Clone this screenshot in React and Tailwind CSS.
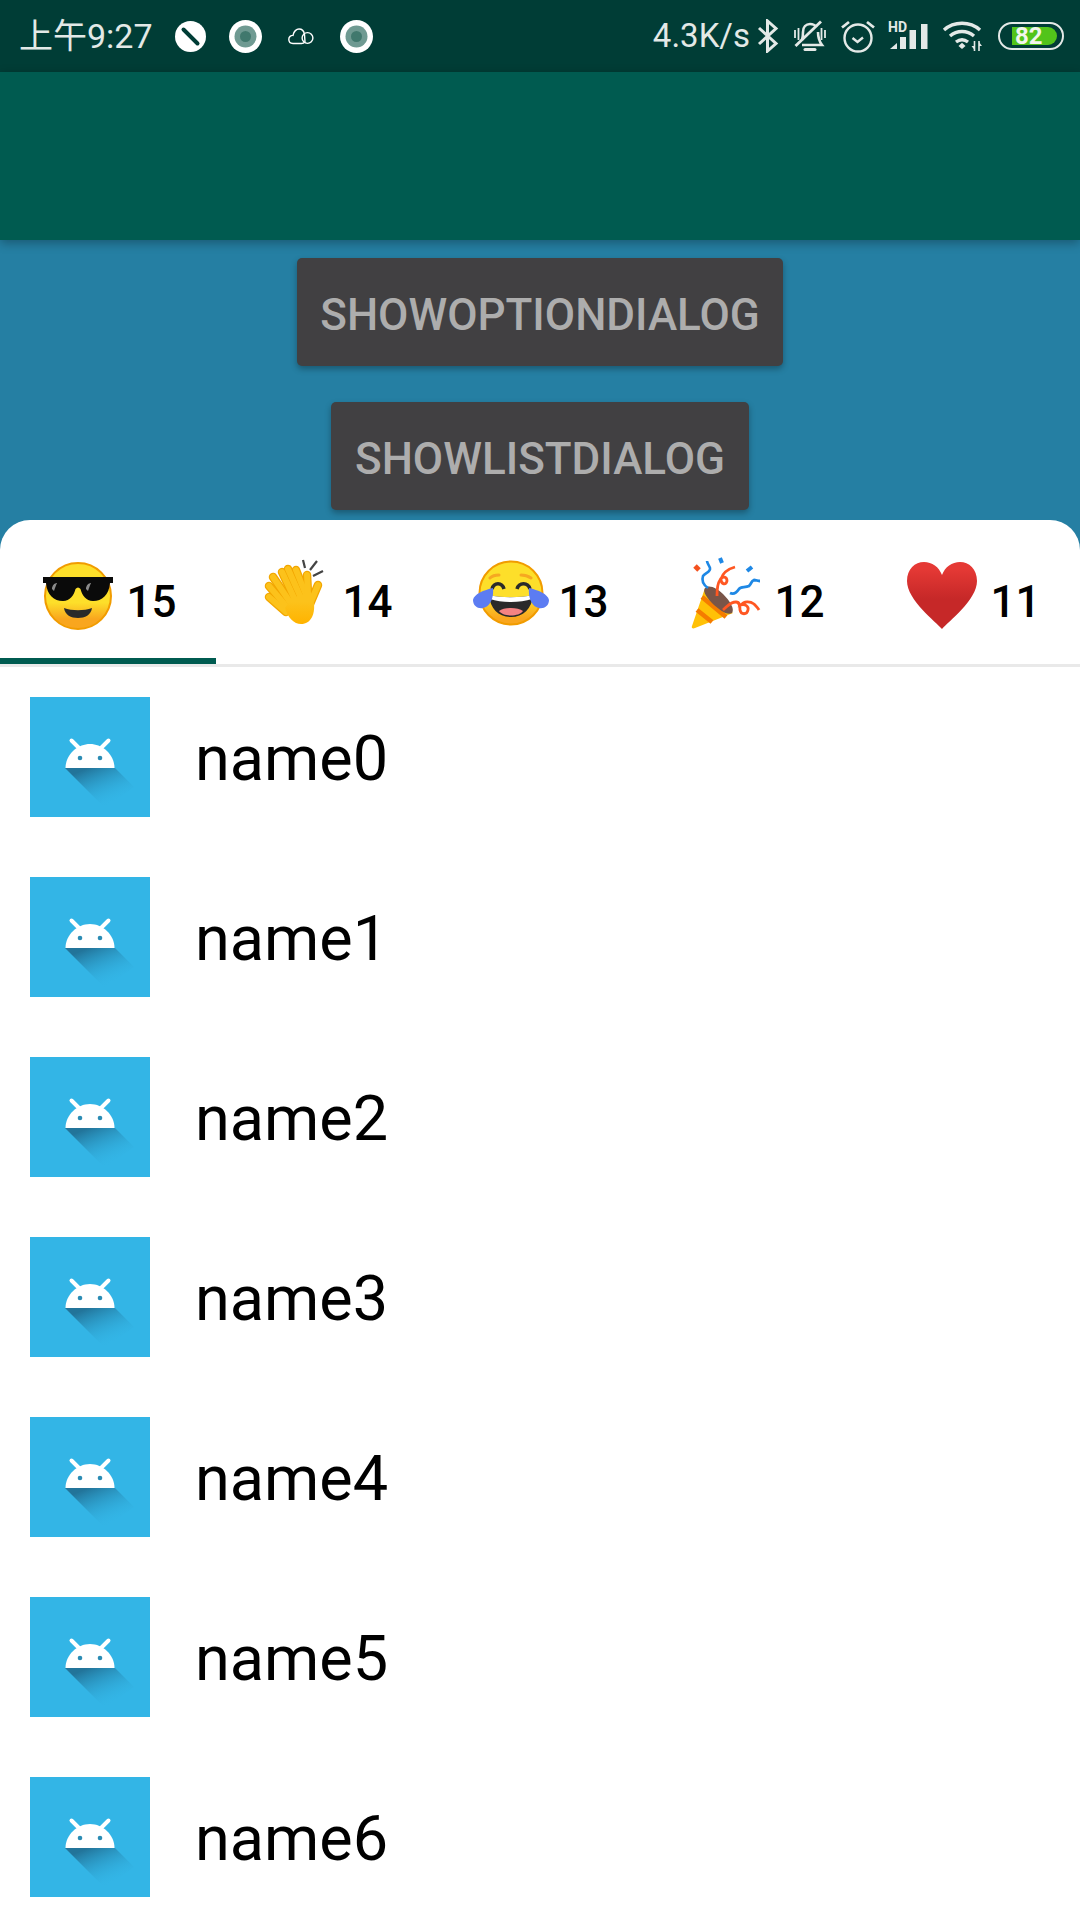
const rows = ["name0", "name1", "name2", "name3", "name4", "name5", "name6"];

function RingDot() {
  return (
    <svg width="33" height="33" viewBox="0 0 33 33">
      <circle cx="16.5" cy="16.5" r="16.5" fill="#fff" />
      <circle cx="16.5" cy="16.5" r="11" fill="#6f9a92" />
      <circle cx="16.5" cy="16.5" r="5.5" fill="#40786d" />
    </svg>
  );
}

function BlockIcon() {
  return (
    <svg width="31" height="31" viewBox="0 0 31 31">
      <circle cx="15.5" cy="15.5" r="15.5" fill="#fff" />
      <path d="M8.5 8.5 L22.5 22.5" stroke="#003d36" strokeWidth="4" strokeLinecap="round" />
    </svg>
  );
}

function CloudIcon() {
  return (
    <svg width="26" height="17" viewBox="0 0 26 17" fill="none" stroke="#fff" strokeWidth="1.4">
      <path d="M5 15.5 C1.5 15.5 .8 12.8 .8 11.3 C.8 8.8 2.8 7.3 5 7.4 C5.6 3.2 8.6 1 11 1 C14 1 16 3.4 16.5 6.4 L17 14 C16 15 15 15.5 13.5 15.5 Z" />
      <circle cx="19.5" cy="10" r="5.4" />
    </svg>
  );
}

function BluetoothIcon() {
  return (
    <svg width="22" height="34" viewBox="0 0 22 34" fill="none" stroke="#e3e9e7" strokeWidth="3">
      <path d="M2 9 L19 24.5 L10.5 32 V2 L19 9.5 L2 25" />
    </svg>
  );
}

function MutedBell() {
  return (
    <svg width="34" height="33" viewBox="0 0 34 33" fill="none" stroke="#e3e9e7" strokeWidth="2.6">
      <path d="M9 20 C10 17 10 15 10 12 C10 7 13 4 17 4 C20 4 22 5 23.5 7" />
      <path d="M25 12 C25 17 26 21 29 25 H9" />
      <path d="M12 29.5 H22" strokeWidth="3" strokeLinecap="round" />
      <path d="M2.5 26 L28 1.5" strokeWidth="2.8" />
      <path d="M2 10 V18 M5.5 8 V20 M28.5 8 V20 M32 10 V18" strokeWidth="1.8" />
    </svg>
  );
}

function AlarmIcon() {
  return (
    <svg width="34" height="33" viewBox="0 0 34 33" fill="none" stroke="#e3e9e7" strokeWidth="2.4">
      <circle cx="17" cy="18" r="13.5" />
      <path d="M11.5 18 L16.5 22 L22 17.5" />
      <path d="M1 7.5 L8 2 M33 7.5 L26 2" strokeWidth="2.8" />
    </svg>
  );
}

function SignalIcon() {
  return (
    <svg width="41" height="30" viewBox="0 0 41 30" fill="#e3e9e7">
      <path d="M2 28 L9 22 V28 Z" />
      <rect x="12" y="16" width="6" height="12" />
      <rect x="21.5" y="9" width="6.5" height="19" />
      <rect x="33" y="3" width="6.5" height="25" />
      <text x="0" y="11" fontSize="14" fontWeight="700" fontFamily="Roboto, sans-serif">HD</text>
    </svg>
  );
}

function WifiIcon() {
  return (
    <svg width="42" height="32" viewBox="0 0 42 32" fill="none" stroke="#e3e9e7" strokeWidth="3.4">
      <path d="M2 10 C12 1 28 1 38 10" />
      <path d="M8 16 C15 10 25 10 32 16" />
      <path d="M14 22 C18 19 22 19 26 22" />
      <path d="M16.5 26 L20 22.8 L23.5 26 L20 29 Z" fill="#e3e9e7" stroke="none" />
      <path d="M32.5 21 V31 M37 21 V31" strokeWidth="1.6" />
      <path d="M29.5 26 H32.5 V30 Z M37 22 V26 H40 Z" fill="#e3e9e7" stroke="none" />
    </svg>
  );
}

function Battery() {
  return (
    <div className="flex h-[28px] w-[66px] items-center rounded-full border-[2.5px] border-[#e3e9e7] pl-[12px] pr-[3px]">
      <div className="flex h-[18px] w-[45px] items-center justify-start rounded-r-full bg-[#52c41a] pl-[3px] text-[24px] font-bold leading-none text-[#f2f6ee]">
        82
      </div>
    </div>
  );
}

function StatusBar() {
  return (
    <div className="flex h-[72px] shrink-0 items-center bg-[#003d36] pl-[19px] pr-[16px] font-['Roboto','Noto_Sans_CJK_SC',sans-serif] text-[#e3e9e7]">
      <span className="w-[133px] whitespace-nowrap text-[34px] leading-[44px]">上午9:27</span>
      <div className="ml-[23px]"><BlockIcon /></div>
      <div className="ml-[23px]"><RingDot /></div>
      <div className="ml-[26px]"><CloudIcon /></div>
      <div className="ml-[26px]"><RingDot /></div>
      <div className="ml-auto flex items-center">
        <span className="text-[33px] leading-[44px]">4.3K/s</span>
        <div className="ml-[7px]"><BluetoothIcon /></div>
        <div className="ml-[14px]"><MutedBell /></div>
        <div className="ml-[14px]"><AlarmIcon /></div>
        <div className="ml-[13px]"><SignalIcon /></div>
        <div className="ml-[13px]"><WifiIcon /></div>
        <div className="ml-[14px]"><Battery /></div>
      </div>
    </div>
  );
}

function DialogButton({ label, width }) {
  return (
    <div className={`flex h-[108px] ${width} items-center justify-center rounded-[5px] bg-[#414042] pt-[5px] text-[44px] font-medium text-[#adadad] shadow-[0_3px_6px_rgba(0,0,0,0.3)]`}>
      {label}
    </div>
  );
}

function CoolEmoji() {
  return (
    <svg width="72" height="72" viewBox="0 0 72 72">
      <defs>
        <linearGradient id="cool" x1="0" y1="0" x2="0" y2="1">
          <stop offset="0.6" stopColor="#fddf2a" />
          <stop offset="0.85" stopColor="#f9a61e" />
        </linearGradient>
      </defs>
      <circle cx="36" cy="36" r="33" fill="url(#cool)" stroke="#f19c00" strokeWidth="2" />
      <path d="M1 17 H71 V23 H68 C67 35 60 41 51 41 C44 41 40 35 38.5 29 C37 27 35 27 33.5 29 C32 35 28 41 21 41 C12 41 5 35 4 23 H1 Z" fill="#0a0a0a" />
      <path d="M10 29 C10 25 13 23 15 23 C14 25 13 28 12 31 Z M44 29 C44 25 47 23 49 23 C48 25 47 28 46 31 Z" fill="#8a8a8a" />
      <path d="M22 48 C30 51 42 51 50 48 C49 55 43 58 36 58 C29 58 23 55 22 48 Z" fill="#2a2a2a" />
    </svg>
  );
}

const clapFingers = [
  "M11 37 L28 52",
  "M11 26 L28 46",
  "M15 17 L32 42",
  "M24 12 L37 40",
  "M30 9 L43 38",
  "M38 10 L48 35",
  "M49 15 L50 34",
  "M60 25 L52 44",
];

function ClapEmoji() {
  return (
    <svg width="72" height="72" viewBox="0 0 72 72" className="overflow-visible">
      <defs>
        <linearGradient id="clap" x1="0" y1="0" x2="0" y2="1">
          <stop offset="0.3" stopColor="#fcc21b" />
          <stop offset="1" stopColor="#ffb300" />
        </linearGradient>
      </defs>
      <g fill="none" stroke="#f2a600" strokeWidth="8.5" strokeLinecap="round">
        {clapFingers.map((d) => <path key={d} d={d} />)}
      </g>
      <g fill="none" stroke="#fcc21b" strokeWidth="6" strokeLinecap="round">
        {clapFingers.map((d) => <path key={d} d={d} />)}
      </g>
      <path d="M27 48 L34 38 L52 32 L56 44 C57 54 53 64 43 64 C36 64 30 58 27 48 Z" fill="url(#clap)" />
      <path d="M45 0 L47 8 M59 1 L52 10 M65 11 L55 16" stroke="#444" strokeWidth="2.2" fill="none" />
    </svg>
  );
}

function LaughEmoji() {
  return (
    <svg width="72" height="72" viewBox="0 0 72 72" className="overflow-visible">
      <defs>
        <linearGradient id="laugh" x1="0" y1="0" x2="0" y2="1">
          <stop offset="0.55" stopColor="#fddf2a" />
          <stop offset="0.9" stopColor="#f9a61e" />
        </linearGradient>
      </defs>
      <circle cx="37" cy="33" r="31.5" fill="url(#laugh)" stroke="#f19c00" strokeWidth="2" />
      <path d="M16 18 C18 16 22 15 25 15 M47 15 C50 15 54 16 57 18" stroke="#f6a821" strokeWidth="3" fill="none" strokeLinecap="round" />
      <path d="M18 29 C20 22 28 22 30 29 M43 29 C45 22 54 22 56 29" stroke="#2a2a2a" strokeWidth="3.5" fill="none" />
      <path d="M15 35 C28 38 46 38 59 35 C58 49 49 57 37 57 C25 57 16 49 15 35 Z" fill="#2a2a2a" />
      <path d="M15 35 C28 38 46 38 59 35 L58 39 C46 43 28 43 16 39 Z" fill="#fff" />
      <path d="M25 51 C30 47 44 47 49 51 C45 57 29 57 25 51 Z" fill="#f58383" />
      <path d="M19 28 C10 30 0 34 -1 40 C-1 46 4 49 9 48 C16 47 20 38 19 28 Z M55 28 C64 30 74 34 75 40 C75 46 70 49 65 48 C58 47 54 38 55 28 Z" fill="#5c7cf2" />
    </svg>
  );
}

function PartyEmoji() {
  return (
    <svg width="72" height="72" viewBox="0 0 72 72" className="overflow-visible">
      <path d="M2 66 C1 68 3 69 5 68 L43 53 L15 28 Z" fill="#ffc107" />
      <path d="M12 37 L36 57 M7 50 L22 62" stroke="#f57c00" strokeWidth="4.5" fill="none" />
      <path d="M15 28 C19 24 27 28 33 34 C40 41 45 49 42 53 C37 56 30 50 24 45 C18 39 12 32 15 28 Z" fill="#795548" />
      <path d="M5 6 L9 10" stroke="#f4511e" strokeWidth="5" />
      <path d="M18 28 C12 24 12 19 13 16 C15 13 21 12 20 8 C19 5 17 3 17 1" stroke="#1e88e5" strokeWidth="2.6" fill="none" />
      <path d="M30 -2 L32 3 M57 11 L62 7" stroke="#1e88e5" strokeWidth="4" fill="none" />
      <path d="M40 33 C44 35 47 32 49 29 C51 26 55 28 59 26 C62 23 61 21 64 20 C66 20 68 21 70 21" stroke="#1e88e5" strokeWidth="2.8" fill="none" />
      <path d="M27 36 C27 30 27 24 30 20 C33 15 37 17 37 21 C36 25 31 25 31 19 C33 12 38 9 45 7" stroke="#ff5722" strokeWidth="2.8" fill="none" />
      <path d="M33 50 C38 46 40 42 46 42 C50 42 50 46 50 50 C51 55 57 55 58 50 C59 46 55 44 51 45 C54 41 60 41 64 44 C66 46 68 48 69 50" stroke="#ff5722" strokeWidth="2.8" fill="none" />
    </svg>
  );
}

function HeartEmoji() {
  return (
    <svg width="72" height="72" viewBox="0 0 72 72">
      <defs>
        <linearGradient id="heart" x1="0" y1="0" x2="0" y2="1">
          <stop offset="0.1" stopColor="#e53935" />
          <stop offset="0.55" stopColor="#c62828" />
        </linearGradient>
      </defs>
      <path d="M36 69 C30 62 1 40 1 21 C1 9 9 2 18 2 C26 2 33 7 36 15 C39 7 46 2 54 2 C63 2 71 9 71 21 C71 40 42 62 36 69 Z" fill="url(#heart)" />
    </svg>
  );
}

const tabs = [
  { Emoji: CoolEmoji, count: "15" },
  { Emoji: ClapEmoji, count: "14" },
  { Emoji: LaughEmoji, count: "13" },
  { Emoji: PartyEmoji, count: "12" },
  { Emoji: HeartEmoji, count: "11" },
];

function AndroidThumb() {
  return (
    <svg width="120" height="120" viewBox="0 0 120 120" className="shrink-0">
      <defs>
        <linearGradient id="droidShadow" x1="0.2" y1="0.1" x2="0.75" y2="0.85">
          <stop offset="0" stopColor="#22749a" stopOpacity="1" />
          <stop offset="1" stopColor="#33b5e6" stopOpacity="0" />
        </linearGradient>
      </defs>
      <rect width="120" height="120" fill="#33b5e6" />
      <path d="M35 71 H85 L104 90 L75 111 Z" fill="url(#droidShadow)" />
      <path d="M35.5 71 C35.5 58 47 47 60 47 C73 47 84.5 58 84.5 71 Z" fill="#fff" />
      <path d="M41.5 43.5 L49 51 M78.5 43.5 L71 51" stroke="#fff" strokeWidth="4" strokeLinecap="round" />
      <circle cx="50" cy="61" r="2.3" fill="#2b8cb4" />
      <circle cx="70" cy="61" r="2.3" fill="#2b8cb4" />
    </svg>
  );
}

export default function App() {
  return (
    <div className="flex h-[1920px] w-[1080px] flex-col overflow-hidden bg-[#257fa3] font-['Roboto',sans-serif]">
      <StatusBar />
      <div className="h-[168px] shrink-0 bg-[#005b50] shadow-[0_3px_10px_rgba(0,0,0,0.3)]" />
      <div className="flex h-[280px] shrink-0 flex-col items-center gap-[36px] pt-[18px]">
        <DialogButton label="SHOWOPTIONDIALOG" width="w-[486px]" />
        <DialogButton label="SHOWLISTDIALOG" width="w-[418px]" />
      </div>
      <div className="flex-1 rounded-t-[30px] bg-white">
        <div className="flex h-[147px] border-b-[3px] border-[#e9e9e9]">
          {tabs.map(({ Emoji, count }, i) => (
            <div key={count} className={`flex h-full w-[216px] items-center justify-center gap-[12px] border-b-[6px] pl-[3px] pt-[14px] ${i === 0 ? "border-[#005b50]" : "border-transparent"}`}>
              <Emoji />
              <span className="mt-[12px] text-[44px] font-medium leading-none text-black">{count}</span>
            </div>
          ))}
        </div>
        {rows.map((name) => (
          <div key={name} className="flex h-[180px] items-center gap-[45px] pl-[30px]">
            <AndroidThumb />
            <span className="pt-[2px] text-[63px] leading-none text-black">{name}</span>
          </div>
        ))}
      </div>
    </div>
  );
}
